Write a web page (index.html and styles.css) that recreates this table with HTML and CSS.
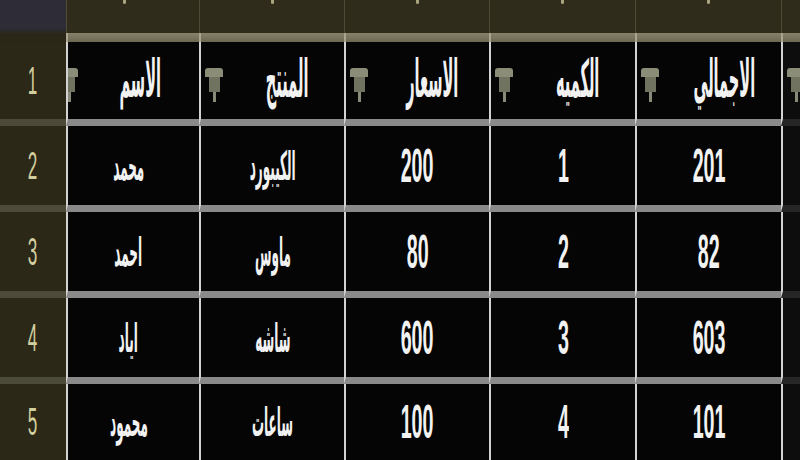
FILE: index.html
```html
<!DOCTYPE html>
<html lang="ar">
<head>
<meta charset="utf-8">
<title>Sheet</title>
<link rel="stylesheet" href="styles.css">
</head>
<body>
<div class="sheet">
  <!-- column letters row (letters scrolled out of view, only tips visible) -->
  <div class="corner"></div>
  <div class="ch first"><span class="tip"></span></div>
  <div class="ch"><span class="tip"></span></div>
  <div class="ch"><span class="tip"></span></div>
  <div class="ch"><span class="tip"></span></div>
  <div class="ch"><span class="tip"></span></div>
  <div class="ch"></div>

  <!-- band -->
  <div class="band-rh"></div>
  <div class="band"></div>
  <div class="band"></div>
  <div class="band"></div>
  <div class="band"></div>
  <div class="band"></div>
  <div class="band"></div>

  <!-- row 1 header -->
  <div class="rh"><span class="rn">1</span></div>
  <div class="cell head first"><span class="filter"></span><span class="ht">الاسم</span></div>
  <div class="cell head"><span class="filter"></span><span class="ht">المنتج</span></div>
  <div class="cell head"><span class="filter"></span><span class="ht">الاسعار</span></div>
  <div class="cell head"><span class="filter"></span><span class="ht">الكميه</span></div>
  <div class="cell head"><span class="filter"></span><span class="ht">الاجمالي</span></div>
  <div class="cell head edge"><span class="filter"></span></div>

  <!-- row 2 -->
  <div class="rh"><span class="rn">2</span></div>
  <div class="cell first"><span class="ar">محمد</span></div>
  <div class="cell"><span class="ar">الكيبورد</span></div>
  <div class="cell"><span class="num">200</span></div>
  <div class="cell"><span class="num">1</span></div>
  <div class="cell"><span class="num">201</span></div>
  <div class="cell edge"></div>

  <!-- row 3 -->
  <div class="rh"><span class="rn">3</span></div>
  <div class="cell first"><span class="ar">احمد</span></div>
  <div class="cell"><span class="ar">ماوس</span></div>
  <div class="cell"><span class="num">80</span></div>
  <div class="cell"><span class="num">2</span></div>
  <div class="cell"><span class="num">82</span></div>
  <div class="cell edge"></div>

  <!-- row 4 -->
  <div class="rh"><span class="rn">4</span></div>
  <div class="cell first"><span class="ar">اياد</span></div>
  <div class="cell"><span class="ar">شاشه</span></div>
  <div class="cell"><span class="num">600</span></div>
  <div class="cell"><span class="num">3</span></div>
  <div class="cell"><span class="num">603</span></div>
  <div class="cell edge"></div>

  <!-- row 5 -->
  <div class="rh last"><span class="rn">5</span></div>
  <div class="cell first last"><span class="ar">محمود</span></div>
  <div class="cell last"><span class="ar">ساعات</span></div>
  <div class="cell last"><span class="num">100</span></div>
  <div class="cell last"><span class="num">4</span></div>
  <div class="cell last"><span class="num">101</span></div>
  <div class="cell edge last"></div>
</div>
</body>
</html>
```

FILE: styles.css
```css
html, body {
  margin: 0;
  padding: 0;
  background: #000;
  overflow: hidden;
}

.sheet {
  width: 800px;
  height: 460px;
  display: grid;
  grid-template-columns: 66px 133px 145px 145px 146px 146px 1fr;
  grid-template-rows: 33px 9px 84px 86px 86px 86px 1fr;
  font-family: "Liberation Sans", "DejaVu Sans", sans-serif;
  overflow: hidden;
}

.corner {
  background: linear-gradient(#2d2c37 0, #2d2c37 28px, #2a2718 34px);
}

.ch {
  background: #2f2c1c;
  border-left: 1px solid #4d4a35;
  display: flex;
  justify-content: center;
  overflow: hidden;
}

.ch.first {
  padding-right: 18px;
}

.tip {
  width: 3px;
  height: 4px;
  border-radius: 0 0 2px 2px;
  background: #a9a47e;
}

.band-rh {
  background: #2a2718;
}

.band {
  background: linear-gradient(#86826a, #6c6852);
  border-left: 2px solid #a9a68f;
}

.rh {
  background: #2b2818;
  border-bottom: 7px solid #4c4a39;
  display: flex;
  align-items: center;
  justify-content: center;
  color: #d3ce9e;
}

.rh.last {
  border-bottom: 0;
}

.rn {
  display: inline-block;
  font-size: 38px;
  transform: scaleX(0.45);
  line-height: 1;
}

.cell {
  position: relative;
  background: #050505;
  border-left: 2px solid #d2d2d2;
  border-bottom: 7px solid #8a8a8a;
  display: flex;
  align-items: center;
  justify-content: center;
  color: #f2f2f2;
  overflow: hidden;
}

.cell.first {
  padding-right: 10px;
}

.cell.last {
  border-bottom: 0;
}

.cell.edge {
  background: #0d0d0d;
  border-bottom-color: #262626;
}

.cell.edge.last {
  border-bottom: 0;
}

.cell.head {
  padding-left: 30px;
}

.cell.head.first {
  padding-left: 14px;
  padding-right: 0;
}

.filter {
  position: absolute;
  left: 4px;
  top: 26px;
  width: 18px;
  height: 35px;
  background:
    linear-gradient(#8b8d79, #8b8d79) 0 0 / 18px 9px no-repeat,
    linear-gradient(#70735f, #70735f) 4px 9px / 11px 15px no-repeat,
    linear-gradient(#8a8a7a, #8a8a7a) 8px 24px / 3px 10px no-repeat;
  border-radius: 3px 3px 0 0;
}

.cell.first .filter {
  left: -8px;
}

.ht {
  display: inline-block;
  font-family: "DejaVu Sans", sans-serif;
  font-weight: bold;
  font-size: 52px;
  line-height: 1;
  transform: scaleX(0.28);
  white-space: nowrap;
  margin-top: -4px;
}

.ar {
  display: inline-block;
  font-family: "DejaVu Sans", sans-serif;
  font-weight: bold;
  font-size: 40px;
  line-height: 1;
  transform: scaleX(0.3);
  white-space: nowrap;
}

.num {
  display: inline-block;
  font-weight: bold;
  font-size: 48px;
  line-height: 1;
  transform: scaleX(0.41);
  white-space: nowrap;
}
```
